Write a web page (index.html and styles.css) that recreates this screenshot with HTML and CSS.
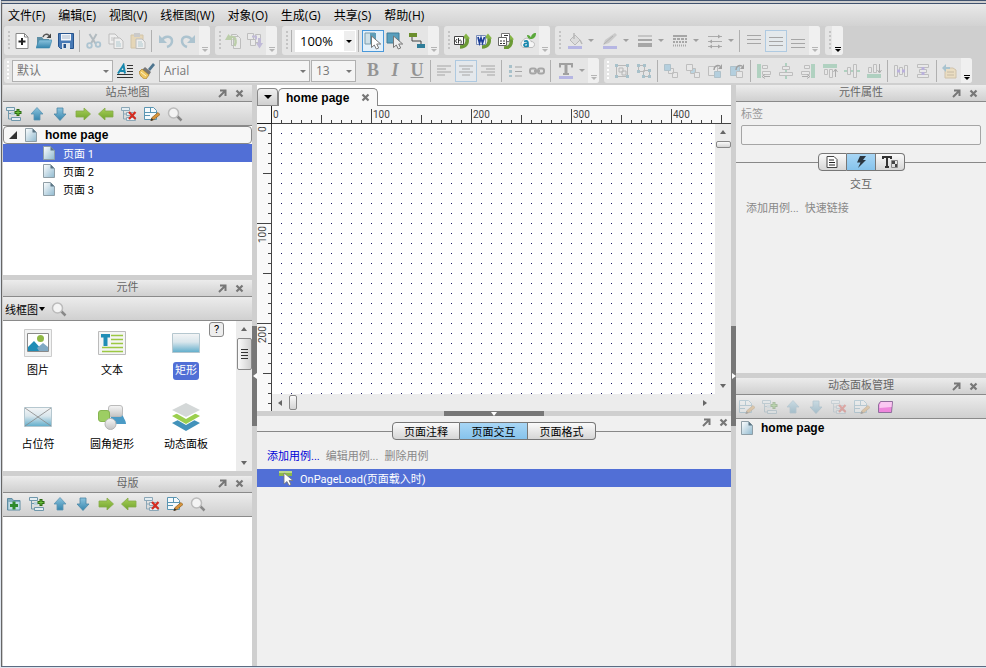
FILE: index.html
```html
<!DOCTYPE html>
<html lang="zh-CN">
<head>
    <meta charset="UTF-8">
    <meta name="viewport" content="width=device-width, initial-scale=1.0">
    <title>home page</title>
    <link rel="stylesheet" href="styles.css">
</head>
<body>
    <!-- 图标 -->
    <svg class="sprite" aria-hidden="true">
        <defs>
            <linearGradient id="g-blue" x1="0" y1="0" x2="0" y2="1"><stop offset="0" stop-color="#8cc4de"/><stop offset="1" stop-color="#3585ad"/></linearGradient>
            <linearGradient id="g-green" x1="0" y1="0" x2="0" y2="1"><stop offset="0" stop-color="#a8cf58"/><stop offset="1" stop-color="#6fa32c"/></linearGradient>
            <linearGradient id="g-page" x1="0" y1="0" x2="1" y2="1"><stop offset="0" stop-color="#fff"/><stop offset="1" stop-color="#8fb9cf"/></linearGradient>
            <linearGradient id="g-rect" x1="0" y1="0" x2="0" y2="1"><stop offset="0" stop-color="#f4f5f6"/><stop offset=".45" stop-color="#d9e6ec"/><stop offset="1" stop-color="#5fadcb"/></linearGradient>
            <linearGradient id="g-grey" x1="0" y1="0" x2="0" y2="1"><stop offset="0" stop-color="#f6f6f6"/><stop offset="1" stop-color="#c4c4c4"/></linearGradient>
            <pattern id="dots" width="10" height="10" patternUnits="userSpaceOnUse"><rect x="9" y="9" width="1" height="1" fill="#1c1c66"/></pattern>
        </defs>
        <symbol id="i-new" viewBox="0 0 16 16"><path d="M2 .5h8.500l3.500 3.500v11.500H2z" fill="#fff" stroke="#888"/><path d="M10.500.5v3.500H14" fill="none" stroke="#888"/><path d="M8 5v7M4.500 8.500h7" stroke="#222" stroke-width="2"/></symbol>
        <symbol id="i-open" viewBox="0 0 16 16"><path d="M1 14V4h5l1.500 2H13v8z" fill="#5f8fa5"/><path d="M0 15l3-8h13l-2.500 8z" fill="url(#g-blue)" stroke="#3b87ac" stroke-width=".6"/><path d="M7 4c1-3 4-3.500 6-1.500" fill="none" stroke="#555" stroke-width="1.500"/><path d="M15 .5v4.500h-4.500z" fill="#444"/></symbol>
        <symbol id="i-save" viewBox="0 0 16 16"><path d="M.5.5h15v15h-13l-2-2z" fill="#4779b5" stroke="#26538c"/><path d="M3 1h10v6.500H3z" fill="#f4f7fb"/><path d="M4 3h8M4 5h8" stroke="#a9b9cc"/><path d="M4 10h8v6H4z" fill="#dfe5ec"/><path d="M5.500 11h2.500v4H5.500z" fill="#26538c"/></symbol>
        <symbol id="i-cut" viewBox="0 0 16 16"><path d="M3.500 1l6 9.500M10.500 1L5 10.500" stroke="#566f7d" stroke-width="2"/><circle cx="3.500" cy="12.500" r="2.300" fill="none" stroke="#4689ad" stroke-width="1.800"/><circle cx="12" cy="11.500" r="2.300" fill="none" stroke="#4689ad" stroke-width="1.800"/></symbol>
        <symbol id="i-copy" viewBox="0 0 16 16"><path d="M1 1h6l3 3v7H1z" fill="#fff" stroke="#777"/><path d="M3 5h4M3 7h5" stroke="#888"/><path d="M6 5h6l3 3v7.500H6z" fill="#fff" stroke="#777"/><path d="M8 9h4M8 11h5M8 13h5" stroke="#59a"/></symbol>
        <symbol id="i-paste" viewBox="0 0 16 16"><path d="M1 2h12v13H1z" fill="#e7bc64" stroke="#b08a3b"/><path d="M4 0h6v4H4z" fill="#999"/><path d="M6 6h6l3 3v6.500H6z" fill="#fff" stroke="#777"/><path d="M8 9h4M8 11h5M8 13h5" stroke="#59a"/></symbol>
        <symbol id="i-undo" viewBox="0 0 16 16"><path d="M4 7c3-5 10-4 10 1 0 3-2 5-5 6" fill="none" stroke="#4384a6" stroke-width="2.500"/><path d="M1 2v8h8z" fill="#4384a6"/></symbol>
        <symbol id="i-redo" viewBox="0 0 16 16"><path d="M12 7C9 2 2 3 2 8c0 3 2 5 5 6" fill="none" stroke="#4384a6" stroke-width="2.500"/><path d="M15 2v8H7z" fill="#4384a6"/></symbol>
        <symbol id="i-out" viewBox="0 0 16 16"><path d="M6.500 1.500h5l2 2v9h-7z" fill="#f5f5f5" stroke="#777"/><path d="M8.500 3.500h5l2 2v10h-7z" fill="#f5f5f5" stroke="#777"/><path d="M4 6c1-3 6-3 6.500 1 .5 2 0 4-1 6" fill="none" stroke="#6ea43b" stroke-width="2.500"/><path d="M0 7l3.500-6L8 7z" fill="#6ea43b"/></symbol>
        <symbol id="i-in" viewBox="0 0 16 16"><path d="M.5.5h6v6h-6zM8.500 1.500h5v8h-5zM3.500 6.500h5v6h-5z" fill="#f5f5f5" stroke="#777"/><path d="M11 5h3v5h2l-3.500 5.500L9 10h2z" fill="#7c6cc0"/><path d="M5 3.500h4v3" fill="none" stroke="#7c6cc0" stroke-width="2"/></symbol>
        <symbol id="i-sel" viewBox="0 0 18 18"><path d="M1 1h10v11H1z" fill="#cfe0e8" stroke="#7d9dac"/><path d="M6 1h6v11H6z" fill="#5e9db8"/><path d="M7.500 4v11.500l2.800-2.500 2 4 2.400-1-2-4h4z" fill="#fff" stroke="#777"/></symbol>
        <symbol id="i-sel2" viewBox="0 0 18 18"><path d="M1 1h12v10H1z" fill="#5a9fbd" stroke="#3f7d99"/><path d="M7.500 4v11.500l2.800-2.500 2 4 2.400-1-2-4h4z" fill="#eee" stroke="#777"/></symbol>
        <symbol id="i-conn" viewBox="0 0 18 18"><path d="M4 4v5h9v4" fill="none" stroke="#444"/><path d="M1 1h8v4H1z" fill="#6b8e2d"/><path d="M9 12h8v4H9z" fill="#2f7d99"/></symbol>
        <symbol id="i-html" viewBox="0 0 16 16"><path d="M6 14c6 0 8-4 7-9" fill="none" stroke="#6b9a35" stroke-width="3.500"/><path d="M8 5.500L12 .5l4 5z" fill="#86b545"/><path d="M.5 3.500h9v8h-9z" fill="#fff" stroke="#444"/><path d="M3 6L1.500 8 3 10M4.500 5v5.500M4.500 8c3-2 3 0 2.500 2.500" fill="none" stroke="#333"/></symbol>
        <symbol id="i-word" viewBox="0 0 16 16"><path d="M6 14c6 0 8-4 7-9" fill="none" stroke="#6b9a35" stroke-width="3.500"/><path d="M8 5.500L12 .5l4 5z" fill="#86b545"/><path d="M.5 2.500h9v9h-9z" fill="#eef2fb" stroke="#7d8fb8"/><path d="M2 4l1.500 6L5 5l1.500 5L8.500 4" fill="none" stroke="#1c3e96" stroke-width="1.700"/></symbol>
        <symbol id="i-spec" viewBox="0 0 16 16"><path d="M6 15c6 0 8-4 7-9" fill="none" stroke="#6b9a35" stroke-width="3.500"/><path d="M9 6.500L12.500 2l3.500 4.500z" fill="#86b545"/><path d="M3.500.5h8v8h-8z" fill="#fff" stroke="#777"/><path d="M.5 4.500h8v8h-8z" fill="#fff" stroke="#666"/><path d="M2 8h2M5 8h2M2 10.500h2M5 10.500h2M6 2.500h4" stroke="#333"/></symbol>
        <symbol id="i-share" viewBox="0 0 16 16"><path d="M3 14.500a4 4 0 0 1 0-7c2-4 8-2 8 1 5 0 4 6 1 6z" fill="#f5f5f5" stroke="#bbb"/><path d="M4 8.500c5-2 4 2 4 5.500M8 10.500c-5-1-5 3-2 3 1 0 2-1 2-2" fill="none" stroke="#1787ad" stroke-width="1.700"/><path d="M10 6C7 5 7 2 7 2c3 0 4 2 4 3 0-3 2-5 5-5 0 4-2 6-6 6z" fill="#5aa83a"/></symbol>
        <symbol id="i-bucket" viewBox="0 0 16 16"><path d="M3 7l5-5 5 5-5 5z" fill="#ccc" stroke="#666"/><path d="M7 0v6M13 7l2 4" stroke="#666" stroke-width="1.500"/><path d="M1 13h14v3H1z" fill="#6060e0"/></symbol>
        <symbol id="i-pen" viewBox="0 0 16 16"><path d="M1 12l2-5L13 0l2 2-8 8z" fill="#999"/><path d="M2 11l9-8" stroke="#555"/><path d="M1 13h14v3H1z" fill="#6060e0"/></symbol>
        <symbol id="i-weight" viewBox="0 0 16 16"><path d="M1 3h14" stroke="#333"/><path d="M1 7h14" stroke="#333" stroke-width="2"/><path d="M1 12h14" stroke="#333" stroke-width="4"/></symbol>
        <symbol id="i-dash" viewBox="0 0 16 16"><g stroke="#333" stroke-width="2"><path d="M1 3h14"/><path d="M1 6h14" stroke-dasharray="3 1"/><path d="M1 9h14" stroke-dasharray="2 1"/><path d="M1 12.500h14" stroke-dasharray="1 1"/></g></symbol>
        <symbol id="i-ends" viewBox="0 0 16 16"><path d="M1 3.500h14M1 8.500h14M1 13.500h14" stroke="#444"/><path d="M11 1.500l3 2-3 2zM5 6.500l-3 2 3 2zM5 11.500l-3 2 3 2zM11 11.500l3 2-3 2z" fill="#333"/></symbol>
        <symbol id="i-vtop" viewBox="0 0 16 16"><path d="M1 2.500h14M1 6.500h14M1 10.500h14" stroke="#333"/></symbol>
        <symbol id="i-vmid" viewBox="0 0 16 16"><path d="M1 4.500h14M1 8.500h14M1 12.500h14" stroke="#333"/></symbol>
        <symbol id="i-vbot" viewBox="0 0 16 16"><path d="M1 6.500h14M1 10.500h14M1 14.500h14" stroke="#333"/></symbol>
        <symbol id="i-style" viewBox="0 0 16 16"><path d="M1 10.500L6.500 2 8 10.500M3 8h5" fill="none" stroke="#1787ad" stroke-width="2"/><path d="M10 2.500h6M10 5.500h6M10 8.500h6M0 11.500h16M0 14.500h16" stroke="#333"/></symbol>
        <symbol id="i-brush" viewBox="0 0 16 16"><path d="M9 6l5-6 2 2-5 6z" fill="#4e758f"/><path d="M6 4l6 5-2 3-7-5z" fill="#777"/><path d="M3 6l7 6-3 4c-3 0-6-3-7-7z" fill="#eec662" stroke="#a47a25" stroke-width=".7"/><path d="M2 9l5 4" stroke="#fff4c5"/></symbol>
        <symbol id="i-left" viewBox="0 0 16 16"><path d="M1 3h14M1 6h9M1 9h14M1 12h8" stroke="#333"/></symbol>
        <symbol id="i-center" viewBox="0 0 16 16"><path d="M1 3h14M4 6h8M1 9h14M4 12h8" stroke="#333"/></symbol>
        <symbol id="i-right" viewBox="0 0 16 16"><path d="M1 3h14M6 6h9M1 9h14M7 12h8" stroke="#333"/></symbol>
        <symbol id="i-list" viewBox="0 0 16 16"><path d="M2 2h3v3H2zM2 7h3v3H2zM2 12h3v2H2z" fill="#388099"/><path d="M8 4h7M8 8.500h7M8 13h7" stroke="#333"/></symbol>
        <symbol id="i-link" viewBox="0 0 16 16"><rect x="1" y="5.500" width="6" height="5" rx="2" fill="none" stroke="#333" stroke-width="2"/><rect x="9" y="5.500" width="6" height="5" rx="2" fill="none" stroke="#333" stroke-width="2"/><path d="M5 8h6" stroke="#333" stroke-width="2"/></symbol>
        <symbol id="i-textcolor" viewBox="0 0 16 16"><path d="M2 4.500V1h12v3.500M5 11h6" fill="none" stroke="#222" stroke-width="2"/><path d="M8 1v10" stroke="#222" stroke-width="3"/><path d="M1 13h14v3H1z" fill="#6060e0"/></symbol>
        <symbol id="i-group" viewBox="0 0 16 16"><path d="M2.500 2.500h11v11h-11z" fill="none" stroke="#666"/><path d="M5 5h4v4H5zM8 8h4v4H8z" fill="none" stroke="#666"/><path d="M1 1h3v3H1zM12 1h3v3h-3zM1 12h3v3H1zM12 12h3v3h-3z" fill="#388099"/></symbol>
        <symbol id="i-ungroup" viewBox="0 0 16 16"><path d="M2.500 2.500h6v6h-6zM7.500 7.500h6v6h-6z" fill="none" stroke="#666"/><path d="M1 1h3v3H1zM7 1h3v3H7zM1 7h3v3H1zM12 6h3v3h-3zM6 12h3v3H6zM12 12h3v3h-3z" fill="#388099"/></symbol>
        <symbol id="i-front" viewBox="0 0 16 16"><path d="M9.500 9.500h5v5h-5zM5.500 5.500h5v5h-5z" fill="#eee" stroke="#777"/><path d="M1.500 1.500h6v6h-6z" fill="#5aa6d0" stroke="#4a7f99"/></symbol>
        <symbol id="i-back" viewBox="0 0 16 16"><path d="M5.500 5.500h5v5h-5z" fill="#6eb4d8" stroke="#777"/><path d="M1.500 1.500h6v6h-6zM9.500 9.500h5v5h-5z" fill="#eee" stroke="#777"/></symbol>
        <symbol id="i-fwd" viewBox="0 0 16 16"><path d="M1.500 3.500h9v9h-9z" fill="#eee" stroke="#777"/><path d="M7.500 8.500h6v6h-6z" fill="#5aa6d0" stroke="#4a7f99"/><path d="M7 7c0-4 3-5 6-4" fill="none" stroke="#222" stroke-width="1.500"/><path d="M15 1v5h-4z" fill="#222"/></symbol>
        <symbol id="i-bwd" viewBox="0 0 16 16"><path d="M1.500 3.500h9v9h-9z" fill="#5aa6d0" stroke="#4a7f99"/><path d="M7.500 8.500h6v6h-6z" fill="#eee" stroke="#777"/><path d="M7 7c0-4 3-5 6-4" fill="none" stroke="#222" stroke-width="1.500"/><path d="M15 1v5h-4z" fill="#222"/></symbol>
        <symbol id="i-al" viewBox="0 0 16 16"><path d="M1 1h4v14H1z" fill="#4dab7c"/><path d="M6.500 2.500h5v3h-5zM6.500 8.500h8v3h-8z" fill="#eee" stroke="#777"/><path d="M14 13.500H8M9 11.500l-3 2 3 2" fill="none" stroke="#444"/></symbol>
        <symbol id="i-ac" viewBox="0 0 16 16"><path d="M7 0h2v16H7z" fill="#4dab7c"/><path d="M4.500 3.500h7v3h-7zM1.500 9.500h13v3h-13z" fill="#eee" stroke="#777"/></symbol>
        <symbol id="i-ar" viewBox="0 0 16 16"><path d="M11 1h4v14h-4z" fill="#4dab7c"/><path d="M4.500 2.500h5v3h-5zM1.500 8.500h8v3h-8z" fill="#eee" stroke="#777"/><path d="M2 13.500h6M7 11.500l3 2-3 2" fill="none" stroke="#444"/></symbol>
        <symbol id="i-at" viewBox="0 0 16 16"><path d="M1 1h14v4H1z" fill="#4dab7c"/><path d="M2.500 6.500h3v5h-3zM7.500 6.500h3v8h-3z" fill="#eee" stroke="#777"/><path d="M13.500 14V7M11.500 9l2-3 2 3" fill="none" stroke="#444"/></symbol>
        <symbol id="i-am" viewBox="0 0 16 16"><path d="M0 7h16v2H0z" fill="#4dab7c"/><path d="M3.500 4.500h3v7h-3zM9.500 1.500h3v13h-3z" fill="#eee" stroke="#777"/></symbol>
        <symbol id="i-ab" viewBox="0 0 16 16"><path d="M1 11h14v4H1z" fill="#4dab7c"/><path d="M2.500 4.500h3v5h-3zM7.500 1.500h3v8h-3z" fill="#eee" stroke="#777"/><path d="M13.500 1v8M11.500 7l2 3 2-3" fill="none" stroke="#444"/></symbol>
        <symbol id="i-dh" viewBox="0 0 16 16"><path d="M1.500 2.500h3v11h-3zM6.500 4.500h3v7h-3zM11.500 2.500h3v11h-3z" fill="#eee" stroke="#777"/><path d="M4 6.500h3v3H4zM9 6.500h3v3H9z" fill="#6b51ca"/></symbol>
        <symbol id="i-dv" viewBox="0 0 16 16"><path d="M2.500 1.500h11v3h-11zM4.500 6.500h7v3h-7zM2.500 11.500h11v3h-11z" fill="#eee" stroke="#777"/><path d="M6.500 4h3v3h-3zM6.500 9h3v3h-3z" fill="#6b51ca"/></symbol>
        <symbol id="i-note" viewBox="0 0 16 16"><path d="M3 5h8l3 2v8H3z" fill="#f3cf82" stroke="#a58142"/><path d="M5 9h7M5 12h7" stroke="#8c6a2c"/><path d="M8 4H4V1L0 5l4 4V6h4z" fill="#3785a5"/></symbol>

        <symbol id="i-addpage" viewBox="0 0 16 16"><path d="M.5 1.500h8v3h-8zM5.500 11.500h9v3h-9z" fill="#e3edf2" stroke="#6f97ab"/><path d="M2.500 5v8h3M2.500 7.500h4" fill="none" stroke="#6f97ab"/><path d="M5 6h4v3H5z" fill="#b8d0dc"/><path d="M12 3v7M8.500 6.500h7" stroke="#2c6b12" stroke-width="3"/><path d="M12 4v5M9.500 6.500h5" stroke="#6cc23e"/></symbol>
        <symbol id="i-up" viewBox="0 0 16 16"><path d="M8 1.500l6 6.500h-3v6H5V8H2z" fill="url(#g-blue)" stroke="#5e96b2" stroke-width=".8"/></symbol>
        <symbol id="i-down" viewBox="0 0 16 16"><path d="M8 14.500L2 8h3V2h6v6h3z" fill="url(#g-blue)" stroke="#4b86a5" stroke-width=".8"/></symbol>
        <symbol id="i-indent" viewBox="0 0 16 16"><path d="M15.500 8L9 2v3H1v6h8v3z" fill="url(#g-green)" stroke="#85ab49" stroke-width=".8"/></symbol>
        <symbol id="i-outdent" viewBox="0 0 16 16"><path d="M.5 8L7 2v3h8v6H7v3z" fill="url(#g-green)" stroke="#85ab49" stroke-width=".8"/></symbol>
        <symbol id="i-del" viewBox="0 0 16 16"><path d="M.5 1.500h8v3h-8zM5.500 11.500h9v3h-9zM5.500 6.500h7v3h-7z" fill="#e3edf2" stroke="#8ba7b7"/><path d="M2.500 5v8h3M2.500 8h3" fill="none" stroke="#8ba7b7"/><path d="M8 6l6.500 7M14.500 6L8 13" stroke="#d42c20" stroke-width="2.200"/></symbol>
        <symbol id="i-edit" viewBox="0 0 16 16"><path d="M.5 1.500h9l3 3v9H.5z" fill="#f5fafc" stroke="#5a95b2"/><path d="M1 6.500h11M6.500 2v5M1 9.500h5" fill="none" stroke="#5a95b2"/><path d="M7 14.500l1-3 6-5 2 2-6 5z" fill="#d9953b" stroke="#8b5d20" stroke-width=".7"/><path d="M6.500 15l1-3 2 2z" fill="#333"/></symbol>
        <symbol id="i-search" viewBox="0 0 16 16"><path d="M10 10l4.500 4.500" stroke="#888" stroke-width="2.500"/><circle cx="6.500" cy="7" r="5" fill="#f4f4f4" stroke="#bbb" stroke-width="1.500"/></symbol>
        <symbol id="i-folder" viewBox="0 0 16 16"><path d="M1.500 14V2.500H6l1.500 2H14V14z" fill="#83adc0" stroke="#5e8ca2"/><path d="M2.500 6h11v7.500h-11z" fill="#c1dce7"/><path d="M8 5.500v8M4 9.500h8" stroke="#2f8a2d" stroke-width="3"/></symbol>
        <symbol id="i-panel" viewBox="0 0 16 16"><path d="M3.500 2.500h12l-1 11h-13v-8z" fill="#ee86dc" stroke="#8f6f9c"/><path d="M4 3h11l-.5 5-12 1v-3z" fill="#fac8f2"/></symbol>
        <symbol id="i-page" viewBox="0 0 12 14"><path d="M.5.5h7l4 4v9H.5z" fill="url(#g-page)" stroke="#8f9ea6"/><path d="M7.500.5v4h4z" fill="#5b7584"/></symbol>
        <symbol id="i-pop" viewBox="0 0 9 9"><path d="M2 1.500h5.500V7M7 2L1 8" fill="none" stroke="#777" stroke-width="2"/></symbol>
        <symbol id="i-close" viewBox="0 0 9 9"><path d="M1.500 1.500l6 6M7.500 1.500l-6 6" fill="none" stroke="#777" stroke-width="2.200"/></symbol>
        <symbol id="i-event" viewBox="0 0 16 16"><path d="M1 1h13v5H1z" fill="#8cb84c"/><path d="M1 1h13v2H1z" fill="#bcd98c"/><path d="M6 3v11l3-2.500 2 4 2-1-2-4h4z" fill="#fff" stroke="#777" stroke-width=".8"/></symbol>

        <symbol id="w-image" viewBox="0 0 28 28"><path d="M.5.5h27v27H.5z" fill="#f2f3f3" stroke="#ccc"/><path d="M3.500 4.500h21v18h-21z" fill="#fff" stroke="#8a8a8a"/><circle cx="16.500" cy="9.500" r="3.500" fill="#8fb845"/><path d="M4 18l6-6 9 10H4z" fill="#1f8db6"/><path d="M13 19l6-5 5 4v4h-9z" fill="#7fa9c4"/></symbol>
        <symbol id="w-text" viewBox="0 0 28 28"><path d="M.5 2.500h27v23H.5z" fill="#f4f5f5" stroke="#bbb"/><path d="M3 5h9v3.500H9.500V17h-4V8.500H3z" fill="#1f8db6"/><path d="M13 6.500h12M13 10.500h12M13 14.500h12M4 18.500h21M4 22.500h21" stroke="#9cc842" stroke-width="1.500"/></symbol>
        <symbol id="w-rect" viewBox="0 0 28 28"><path d="M.5 4.500h27v19H.5z" fill="url(#g-rect)" stroke="#b5c7cf"/></symbol>
        <symbol id="w-holder" viewBox="0 0 28 28"><path d="M.5 4.500h27v19H.5z" fill="url(#g-rect)" stroke="#b5c7cf"/><path d="M1 5l26 18M27 5L1 23" stroke="#888" stroke-width=".8"/></symbol>
        <symbol id="w-round" viewBox="0 0 28 28"><path d="M15 10h9c1 5 4 7 4 11H16c-3 0-4-2-4-5z" fill="#4b9bc6"/><rect x="10.500" y="2.500" width="14" height="11" rx="2.500" fill="url(#g-grey)" stroke="#bbb"/><rect x=".5" y="7.500" width="11" height="11" rx="2.500" fill="#9dce63" stroke="#86b551"/><circle cx="12.500" cy="21" r="5.500" fill="url(#g-grey)" stroke="#b5b5b5"/></symbol>
        <symbol id="w-dyn" viewBox="0 0 28 28"><path d="M0 20l14-7 14 7-14 8z" fill="#4292ba"/><path d="M0 14l14-7 14 7-14 8z" fill="#fff"/><path d="M0 13l14-7 14 7-14 8z" fill="#9bcf4e"/><path d="M0 8l14-7 14 7-14 8z" fill="#fff"/><path d="M0 7l14-7 14 7-14 7z" fill="#d4d8d8"/></symbol>

        <symbol id="s-doc" viewBox="0 0 14 14"><path d="M2 1.500h7l3 3v8H2z" fill="#fff" stroke="#444"/><path d="M4 5h5M4 7.500h6M4 10h6" stroke="#222"/></symbol>
        <symbol id="s-bolt" viewBox="0 0 14 14"><path d="M6 1h6L9 5h3L4 13l2.500-5.500H3z" fill="#2b3640"/></symbol>
        <symbol id="s-type" viewBox="0 0 16 14"><path d="M1 4V2h8v2M5 2v10M3 12h4" fill="none" stroke="#333" stroke-width="2"/><path d="M10 6h3v3h-3zM13 9h3v3h-3z" fill="#444"/><path d="M9.500 5.500h6v7h-6z" fill="none" stroke="#888"/></symbol>
    </svg>

    <div class="app">
        <nav class="menubar">
            <button>文件(F)</button>
            <button>编辑(E)</button>
            <button>视图(V)</button>
            <button>线框图(W)</button>
            <button>对象(O)</button>
            <button>生成(G)</button>
            <button>共享(S)</button>
            <button>帮助(H)</button>
        </nav>

        <div class="toolbars">
            <div class="toolbar-row">
                <div class="group">
                    <span class="grip"></span>
                    <button class="tool" aria-label="新建"><svg><use href="#i-new"/></svg></button>
                    <button class="tool" aria-label="打开"><svg><use href="#i-open"/></svg></button>
                    <button class="tool" aria-label="保存"><svg><use href="#i-save"/></svg></button>
                    <span class="sep"></span>
                    <button class="tool" disabled aria-label="剪切"><svg><use href="#i-cut"/></svg></button>
                    <button class="tool" disabled aria-label="复制"><svg><use href="#i-copy"/></svg></button>
                    <button class="tool" disabled aria-label="粘贴"><svg><use href="#i-paste"/></svg></button>
                    <span class="sep"></span>
                    <button class="tool" disabled aria-label="撤销"><svg><use href="#i-undo"/></svg></button>
                    <button class="tool" disabled aria-label="重做"><svg><use href="#i-redo"/></svg></button>
                    <span class="overflow"></span>
                </div>
                <div class="group">
                    <span class="grip"></span>
                    <button class="tool" disabled aria-label="签出"><svg><use href="#i-out"/></svg></button>
                    <button class="tool" disabled aria-label="签入"><svg><use href="#i-in"/></svg></button>
                    <span class="overflow"></span>
                </div>
                <div class="group">
                    <span class="grip"></span>
                    <span class="sep"></span>
                    <span class="combo zoom"><select aria-label="缩放"><option>100%</option></select></span>
                    <span class="sep"></span>
                    <button class="tool big active" aria-label="相交选择"><svg><use href="#i-sel"/></svg></button>
                    <button class="tool big" aria-label="包含选择"><svg><use href="#i-sel2"/></svg></button>
                    <button class="tool big" aria-label="连接线"><svg><use href="#i-conn"/></svg></button>
                    <span class="overflow"></span>
                </div>
                <div class="group">
                    <span class="grip"></span>
                    <button class="tool" aria-label="生成原型"><svg><use href="#i-html"/></svg></button>
                    <button class="tool" aria-label="生成 Word"><svg><use href="#i-word"/></svg></button>
                    <button class="tool" aria-label="更多生成器"><svg><use href="#i-spec"/></svg></button>
                    <button class="tool" aria-label="分享"><svg><use href="#i-share"/></svg></button>
                    <span class="overflow"></span>
                </div>
                <div class="group">
                    <span class="grip"></span>
                    <button class="tool drop" disabled aria-label="填充"><svg><use href="#i-bucket"/></svg></button>
                    <button class="tool drop" disabled aria-label="线条颜色"><svg><use href="#i-pen"/></svg></button>
                    <button class="tool drop" disabled aria-label="线宽"><svg><use href="#i-weight"/></svg></button>
                    <button class="tool drop" disabled aria-label="线型"><svg><use href="#i-dash"/></svg></button>
                    <button class="tool drop" disabled aria-label="箭头"><svg><use href="#i-ends"/></svg></button>
                    <span class="sep"></span>
                    <button class="tool" disabled aria-label="顶部对齐"><svg><use href="#i-vtop"/></svg></button>
                    <button class="tool active" disabled aria-label="中部对齐"><svg><use href="#i-vmid"/></svg></button>
                    <button class="tool" disabled aria-label="底部对齐"><svg><use href="#i-vbot"/></svg></button>
                    <span class="overflow"></span>
                </div>
                <div class="group">
                    <span class="grip"></span>
                    <span class="overflow dark"></span>
                </div>
            </div>

            <div class="toolbar-row second">
                <div class="group">
                    <span class="grip"></span>
                    <span class="combo style"><select disabled aria-label="样式"><option>默认</option></select></span>
                    <button class="tool" aria-label="样式编辑器"><svg><use href="#i-style"/></svg></button>
                    <button class="tool" aria-label="格式刷"><svg><use href="#i-brush"/></svg></button>
                    <span class="combo font"><select disabled aria-label="字体"><option>Arial</option></select></span>
                    <span class="combo size"><select disabled aria-label="字号"><option>13</option></select></span>
                    <button class="tool letter bold" disabled>B</button>
                    <button class="tool letter italic" disabled>I</button>
                    <button class="tool letter underline" disabled>U</button>
                    <span class="sep"></span>
                    <button class="tool" disabled aria-label="左对齐"><svg><use href="#i-left"/></svg></button>
                    <button class="tool active" disabled aria-label="居中"><svg><use href="#i-center"/></svg></button>
                    <button class="tool" disabled aria-label="右对齐"><svg><use href="#i-right"/></svg></button>
                    <span class="sep"></span>
                    <button class="tool" disabled aria-label="项目符号"><svg><use href="#i-list"/></svg></button>
                    <button class="tool" disabled aria-label="链接"><svg><use href="#i-link"/></svg></button>
                    <span class="sep"></span>
                    <button class="tool drop" disabled aria-label="文字颜色"><svg><use href="#i-textcolor"/></svg></button>
                    <span class="overflow"></span>
                </div>
                <div class="group">
                    <span class="grip"></span>
                    <button class="tool" disabled aria-label="组合"><svg><use href="#i-group"/></svg></button>
                    <button class="tool" disabled aria-label="取消组合"><svg><use href="#i-ungroup"/></svg></button>
                    <span class="sep"></span>
                    <button class="tool" disabled aria-label="置于顶层"><svg><use href="#i-front"/></svg></button>
                    <button class="tool" disabled aria-label="置于底层"><svg><use href="#i-back"/></svg></button>
                    <button class="tool" disabled aria-label="上移一层"><svg><use href="#i-fwd"/></svg></button>
                    <button class="tool" disabled aria-label="下移一层"><svg><use href="#i-bwd"/></svg></button>
                    <span class="sep"></span>
                    <button class="tool" disabled aria-label="左侧对齐"><svg><use href="#i-al"/></svg></button>
                    <button class="tool" disabled aria-label="水平居中"><svg><use href="#i-ac"/></svg></button>
                    <button class="tool" disabled aria-label="右侧对齐"><svg><use href="#i-ar"/></svg></button>
                    <button class="tool" disabled aria-label="上对齐"><svg><use href="#i-at"/></svg></button>
                    <button class="tool" disabled aria-label="垂直居中"><svg><use href="#i-am"/></svg></button>
                    <button class="tool" disabled aria-label="下对齐"><svg><use href="#i-ab"/></svg></button>
                    <span class="sep"></span>
                    <button class="tool" disabled aria-label="横向分布"><svg><use href="#i-dh"/></svg></button>
                    <button class="tool" disabled aria-label="纵向分布"><svg><use href="#i-dv"/></svg></button>
                    <span class="sep"></span>
                    <button class="tool" disabled aria-label="脚注"><svg><use href="#i-note"/></svg></button>
                    <span class="overflow dark"></span>
                </div>
            </div>
        </div>

        <div class="workspace">
            <!-- 左侧 -->
            <aside class="side left">
                <section class="panel">
                    <header class="panel-title">
                        <h2>站点地图</h2>
                        <div class="panel-btns">
                            <button aria-label="弹出"><svg><use href="#i-pop"/></svg></button>
                            <button aria-label="关闭"><svg><use href="#i-close"/></svg></button>
                        </div>
                    </header>
                    <div class="panel-tools">
                        <button aria-label="新增页面"><svg><use href="#i-addpage"/></svg></button>
                        <button aria-label="上移"><svg><use href="#i-up"/></svg></button>
                        <button aria-label="下移"><svg><use href="#i-down"/></svg></button>
                        <button aria-label="降级"><svg><use href="#i-indent"/></svg></button>
                        <button aria-label="升级"><svg><use href="#i-outdent"/></svg></button>
                        <button aria-label="删除"><svg><use href="#i-del"/></svg></button>
                        <button aria-label="编辑"><svg><use href="#i-edit"/></svg></button>
                        <button aria-label="搜索"><svg><use href="#i-search"/></svg></button>
                    </div>
                    <ul class="tree">
                        <li class="root"><span class="twisty"></span><svg><use href="#i-page"/></svg>home page</li>
                        <li class="selected"><svg><use href="#i-page"/></svg>页面 1</li>
                        <li><svg><use href="#i-page"/></svg>页面 2</li>
                        <li><svg><use href="#i-page"/></svg>页面 3</li>
                    </ul>
                </section>

                <section class="panel">
                    <header class="panel-title">
                        <h2>元件</h2>
                        <div class="panel-btns">
                            <button aria-label="弹出"><svg><use href="#i-pop"/></svg></button>
                            <button aria-label="关闭"><svg><use href="#i-close"/></svg></button>
                        </div>
                    </header>
                    <div class="panel-tools">
                        <button class="library">线框图</button>
                        <button aria-label="搜索"><svg><use href="#i-search"/></svg></button>
                    </div>
                    <div class="widgets">
                        <ul class="widget-grid">
                            <li><svg><use href="#w-image"/></svg><span>图片</span></li>
                            <li><svg><use href="#w-text"/></svg><span>文本</span></li>
                            <li class="selected"><svg><use href="#w-rect"/></svg><span>矩形</span></li>
                            <li><svg><use href="#w-holder"/></svg><span>占位符</span></li>
                            <li><svg><use href="#w-round"/></svg><span>圆角矩形</span></li>
                            <li><svg><use href="#w-dyn"/></svg><span>动态面板</span></li>
                        </ul>
                        <button class="help">?</button>
                        <div class="scroll vertical lines">
                            <i class="arrow up"></i>
                            <span class="thumb"></span>
                            <i class="arrow down"></i>
                        </div>
                    </div>
                </section>

                <section class="panel">
                    <header class="panel-title">
                        <h2>母版</h2>
                        <div class="panel-btns">
                            <button aria-label="弹出"><svg><use href="#i-pop"/></svg></button>
                            <button aria-label="关闭"><svg><use href="#i-close"/></svg></button>
                        </div>
                    </header>
                    <div class="panel-tools">
                        <button aria-label="新增文件夹"><svg><use href="#i-folder"/></svg></button>
                        <button aria-label="新增母版"><svg><use href="#i-addpage"/></svg></button>
                        <button aria-label="上移"><svg><use href="#i-up"/></svg></button>
                        <button aria-label="下移"><svg><use href="#i-down"/></svg></button>
                        <button aria-label="降级"><svg><use href="#i-indent"/></svg></button>
                        <button aria-label="升级"><svg><use href="#i-outdent"/></svg></button>
                        <button aria-label="删除"><svg><use href="#i-del"/></svg></button>
                        <button aria-label="编辑"><svg><use href="#i-edit"/></svg></button>
                        <button aria-label="搜索"><svg><use href="#i-search"/></svg></button>
                    </div>
                </section>
            </aside>

            <div class="splitter"><span class="handle"><i class="arrow left"></i></span></div>

            <!-- 中间 -->
            <main class="center">
                <div class="tabs">
                    <button class="tab-menu" aria-label="页面列表"><i class="arrow down"></i></button>
                    <div class="tab">home page<button aria-label="关闭"><svg><use href="#i-close"/></svg></button></div>
                </div>
                <div class="editor">
                    <div class="corner"></div>
                    <div class="ruler-h"><span>0</span><span>100</span><span>200</span><span>300</span><span>400</span></div>
                    <div class="ruler-v"><span>0</span><span>100</span><span>200</span></div>
                    <svg class="canvas"><rect width="100%" height="100%" fill="url(#dots)"/></svg>
                    <div class="scroll vertical">
                        <i class="arrow up"></i>
                        <span class="thumb"></span>
                        <i class="arrow down"></i>
                    </div>
                    <div class="scroll horizontal">
                        <i class="arrow left"></i>
                        <span class="thumb"></span>
                        <i class="arrow right"></i>
                    </div>
                </div>
                <div class="splitter flat"><span class="handle"><i class="arrow down"></i></span></div>
                <section class="page-panel">
                    <div class="segments">
                        <button>页面注释</button>
                        <button class="on">页面交互</button>
                        <button>页面格式</button>
                    </div>
                    <div class="panel-btns">
                        <button aria-label="弹出"><svg><use href="#i-pop"/></svg></button>
                        <button aria-label="关闭"><svg><use href="#i-close"/></svg></button>
                    </div>
                    <div class="links">
                        <a class="enabled" href="#">添加用例...</a>
                        <a href="#">编辑用例...</a>
                        <a href="#">删除用例</a>
                    </div>
                    <div class="event"><svg><use href="#i-event"/></svg>OnPageLoad(页面载入时)</div>
                </section>
            </main>

            <div class="splitter"><span class="handle"><i class="arrow right"></i></span></div>

            <!-- 右侧 -->
            <aside class="side right">
                <section class="panel">
                    <header class="panel-title">
                        <h2>元件属性</h2>
                        <div class="panel-btns">
                            <button aria-label="弹出"><svg><use href="#i-pop"/></svg></button>
                            <button aria-label="关闭"><svg><use href="#i-close"/></svg></button>
                        </div>
                    </header>
                    <div class="field">
                        <label for="widget-label">标签</label>
                        <input type="text" id="widget-label" disabled>
                    </div>
                    <div class="segments icons">
                        <button aria-label="注释"><svg><use href="#s-doc"/></svg></button>
                        <button class="on" aria-label="交互"><svg><use href="#s-bolt"/></svg></button>
                        <button aria-label="格式"><svg><use href="#s-type"/></svg></button>
                    </div>
                    <p class="caption">交互</p>
                    <div class="links">
                        <a href="#">添加用例...</a>
                        <a href="#">快速链接</a>
                    </div>
                </section>

                <section class="panel">
                    <header class="panel-title">
                        <h2>动态面板管理</h2>
                        <div class="panel-btns">
                            <button aria-label="弹出"><svg><use href="#i-pop"/></svg></button>
                            <button aria-label="关闭"><svg><use href="#i-close"/></svg></button>
                        </div>
                    </header>
                    <div class="panel-tools">
                        <button disabled aria-label="编辑"><svg><use href="#i-edit"/></svg></button>
                        <button disabled aria-label="新增状态"><svg><use href="#i-addpage"/></svg></button>
                        <button disabled aria-label="上移"><svg><use href="#i-up"/></svg></button>
                        <button disabled aria-label="下移"><svg><use href="#i-down"/></svg></button>
                        <button disabled aria-label="删除"><svg><use href="#i-del"/></svg></button>
                        <button disabled aria-label="编辑全部"><svg><use href="#i-edit"/></svg></button>
                        <button aria-label="显示面板"><svg><use href="#i-panel"/></svg></button>
                    </div>
                    <ul class="page-list">
                        <li><svg><use href="#i-page"/></svg>home page</li>
                    </ul>
                </section>
            </aside>
        </div>
    </div>
</body>
</html>
```
FILE: styles.css
```css
* {
    box-sizing: border-box;
}
body {
    margin: 0;
    font-family: Roboto, "Noto Sans CJK SC", sans-serif;
    font-size: 11px;
    color: #000;
    background: #dfe6ef;
}
button, select, input {
    font: inherit;
    color: inherit;
    margin: 0;
    padding: 0;
    border: none;
    background: none;
}
h2, p, ul {
    margin: 0;
    padding: 0;
    font-weight: normal;
    font-size: 11px;
    list-style: none;
}
.sprite {
    position: absolute;
    width: 0;
    height: 0;
}
.app {
    display: flex;
    flex-direction: column;
    height: calc(100vh - 1px);
    margin-left: 1px;
    border-top: 4px double #40536f;
    border-left: 1px solid #666;
    border-bottom: 1px solid #5b6b82;
    padding-left: 1px;
    background: #cfcfcf;
}

/* 菜单 */
.menubar {
    display: flex;
    gap: 13px;
    height: 22px;
    padding: 0 5px;
    font-family: "Open Sans", "Noto Sans CJK SC", sans-serif;
    font-size: 12px;
    background: linear-gradient(#e9e9e9, #d2d2d2);
}

/* 工具栏 */
.toolbars {
    height: 59px;
    font-family: "Open Sans", "Noto Sans CJK SC", sans-serif;
    font-size: 12px;
}
.toolbar-row {
    display: flex;
    gap: 5px;
    height: 29px;
    margin-bottom: 3px;
    padding-left: 1px;
}
.toolbar-row.second {
    height: 25px;
}
.group {
    display: flex;
    align-items: center;
    border-radius: 3px;
    background: #e5e5e5;
    overflow: hidden;
}
.grip {
    width: 7px;
    height: 20px;
    background: linear-gradient(#fff 2px, transparent 2px) 3px 0 / 2px 4px repeat-y;
}
.toolbar-row:first-child .grip {
    background: linear-gradient(#c4c4c4 2px, transparent 2px) 4px 0 / 2px 4px repeat-y;
}
.sep {
    width: 6px;
    height: 22px;
    background: linear-gradient(#b0b0b0, #b0b0b0) 2px 0 / 1px 100% no-repeat;
}
.second .sep {
    width: 5px;
}
.tool {
    display: flex;
    align-items: center;
    justify-content: center;
    width: 22px;
    height: 22px;
}
.tool svg {
    width: 16px;
    height: 16px;
}
.tool.big svg {
    width: 18px;
    height: 18px;
}
.tool:disabled {
    opacity: .35;
}
.tool.active {
    border: 1px solid #4a98d9;
    background: #e3f0fa;
}
.tool.drop {
    width: 35px;
    justify-content: flex-start;
    gap: 5px;
    padding-left: 5px;
}
.tool.drop::after {
    content: "";
    border: 3px solid transparent;
    border-top-color: #222;
    border-bottom: none;
}
.letter {
    font-family: "Liberation Serif", serif;
    font-size: 18px;
    font-weight: bold;
}
.italic {
    font-style: italic;
}
.underline {
    text-decoration: underline;
}
.size + .letter {
    margin-left: 6px;
}
.overflow {
    display: flex;
    flex-direction: column;
    align-items: center;
    justify-content: flex-end;
    gap: 1px;
    align-self: stretch;
    width: 11px;
    padding-bottom: 3px;
    color: #b5b5b5;
    background: #f0f0f0;
}
.overflow.dark {
    color: #000;
}
.overflow::before {
    content: "";
    width: 6px;
    height: 1px;
    background: currentColor;
}
.overflow::after {
    content: "";
    border: 3px solid transparent;
    border-top-color: currentColor;
    border-bottom: none;
}
.combo {
    position: relative;
    height: 22px;
    border: 1px solid #b0b0b0;
    background: #f4f4f4;
    color: #777;
}
.combo select {
    width: 100%;
    height: 100%;
    padding: 0 4px;
    appearance: none;
    opacity: 1;
}
.combo::after {
    content: "";
    position: absolute;
    right: 3px;
    top: 9px;
    border: 3px solid transparent;
    border-top-color: currentColor;
    border-bottom: none;
    pointer-events: none;
}
.combo.style {
    width: 101px;
    margin: 0 1px;
}
.combo.font {
    width: 151px;
    margin: 0 1px;
}
.combo.size {
    width: 45px;
}
.combo.zoom {
    width: 61px;
    border-color: #fff;
    color: #000;
    font-size: 13px;
    background: linear-gradient(90deg, #fff 48px, #eee 48px);
}

/* 面板 */
.workspace {
    display: flex;
    flex: 1;
    min-height: 0;
}
.side {
    display: flex;
    flex-direction: column;
    gap: 5px;
}
.left {
    width: 249px;
}
.right {
    width: 250px;
}
.panel {
    display: flex;
    flex-direction: column;
    flex: 1;
    min-height: 0;
    background: #fff;
}
.right .panel {
    background: #f0f0f0;
}
.panel-title {
    display: grid;
    grid-template-columns: 1fr auto 1fr;
    align-items: center;
    height: 17px;
    border-bottom: 1px solid #8a8a8a;
    background: linear-gradient(#ececec, #d0d0d0);
}
.panel-title h2 {
    grid-column: 2;
    line-height: 16px;
    color: #666;
}
.panel-btns {
    display: flex;
    justify-content: flex-end;
    gap: 8px;
    padding-right: 8px;
}
.panel-btns button, .tab button {
    display: flex;
}
.panel-btns svg, .tab svg {
    width: 9px;
    height: 9px;
}
.panel-tools {
    display: flex;
    align-items: center;
    height: 24px;
    border-bottom: 1px solid #8a8a8a;
    background: linear-gradient(#ececec, #d0d0d0);
}
.panel-tools button {
    display: flex;
    align-items: center;
    padding-left: 3px;
    width: 23px;
    height: 23px;
}
.panel-tools svg {
    width: 16px;
    height: 16px;
}
.panel-tools button:disabled {
    opacity: .3;
}
.panel-tools .library {
    width: auto;
    gap: 1px;
    padding: 0 3px 0 2px;
}
.library::after {
    content: "";
    border: 3px solid transparent;
    border-top: 4px solid #000;
    border-bottom: none;
}

/* 站点地图 */
.tree li, .page-list li {
    display: flex;
    align-items: center;
    gap: 8px;
    height: 18px;
    padding-left: 40px;
}
.tree svg, .page-list svg {
    width: 12px;
    height: 14px;
}
.tree .root {
    padding-left: 5px;
    border: 1px solid #888;
    border-radius: 4px;
    background: #f7f7f7;
}
.root, .page-list, .tab {
    font-family: "Liberation Sans", Arial, sans-serif;
    font-size: 12px;
    font-weight: bold;
}
.twisty {
    border: 4px solid #333;
    border-top-color: transparent;
    border-left-color: transparent;
}
.tree .selected {
    color: #fff;
    background: #516fd6;
}
.page-list li {
    padding-left: 5px;
}

/* 元件 */
.widgets {
    position: relative;
    display: flex;
    flex: 1;
    min-height: 0;
}
.widget-grid {
    display: grid;
    grid-template-columns: repeat(3, 70px);
    gap: 23px 4px;
    align-content: start;
    flex: 1;
    padding-top: 8px;
}
.widget-grid li {
    display: flex;
    flex-direction: column;
    align-items: center;
    gap: 5px;
}
.widget-grid svg {
    width: 28px;
    height: 28px;
}
.widget-grid span {
    padding: 0 2px;
    line-height: 18px;
    border-radius: 3px;
}
.widget-grid .selected span {
    color: #fff;
    background: #516fd6;
}
.help {
    position: absolute;
    top: 1px;
    right: 28px;
    width: 15px;
    height: 15px;
    border: 1px solid #888;
    border-radius: 3px;
    line-height: 12px;
    background: #eee;
}

/* 滚动条 */
.scroll {
    display: flex;
    align-items: center;
    background: #ececec;
}
.vertical {
    flex-direction: column;
    width: 16px;
    padding: 6px 0;
}
.horizontal {
    padding: 0 8px 0 6px;
}
.arrow {
    width: 0;
    height: 0;
    border: 3px solid transparent;
}
.arrow.up {
    border-bottom: 4px solid #666;
    border-top: none;
}
.arrow.down {
    border-top: 4px solid #666;
    border-bottom: none;
}
.arrow.left {
    border-right: 4px solid #666;
    border-left: none;
}
.arrow.right {
    border-left: 4px solid #666;
    border-right: none;
}
.scroll .arrow:last-child {
    margin-top: auto;
}
.horizontal .arrow:last-child {
    margin: 0 16px 0 auto;
}
.thumb {
    border: 1px solid #888;
    border-radius: 2px;
    background: linear-gradient(#fafafa, #d5d5d5);
}
.vertical .thumb {
    width: 15px;
    height: 7px;
    margin-top: 7px;
}
.vertical.lines .thumb {
    height: 32px;
    background: repeating-linear-gradient(#333 0 1px, transparent 1px 3px) center / 7px 10px no-repeat, linear-gradient(90deg, #fafafa, #d0d0d0);
}
.horizontal .thumb {
    width: 8px;
    height: 15px;
    margin-left: 7px;
}

/* 分隔条 */
.splitter {
    display: flex;
    align-items: center;
    justify-content: center;
    width: 5px;
    background: #cfcfcf;
}
.splitter.flat {
    width: auto;
    height: 5px;
}
.handle {
    display: flex;
    align-items: center;
    justify-content: center;
    width: 5px;
    height: 100px;
    background: #777;
}
.flat .handle {
    width: 100px;
    height: 5px;
}
.handle .arrow.left {
    border-right-color: #fff;
}
.handle .arrow.right {
    border-left-color: #fff;
}
.handle .arrow.down {
    border-top-color: #fff;
}

/* 编辑区 */
.center {
    display: flex;
    flex-direction: column;
    flex: 1;
    min-width: 0;
}
.tabs {
    display: flex;
    align-items: flex-end;
    height: 21px;
    border-bottom: 1px solid #888;
    background: #fff;
}
.tab-menu {
    display: flex;
    align-items: center;
    justify-content: center;
    width: 21px;
    height: 17px;
    border: 1px solid #888;
    border-bottom: none;
    border-radius: 4px 4px 0 0;
    background: linear-gradient(#f0f0f0, #d0d0d0);
}
.tab-menu .arrow {
    border-width: 4px 4px 0;
    border-top-color: #000;
}
.tab {
    display: flex;
    align-items: center;
    gap: 12px;
    height: 18px;
    margin-bottom: -1px;
    padding: 0 7px;
    border: 1px solid #888;
    border-bottom: none;
    border-radius: 5px 5px 0 0;
    background: #f9f9f9;
}
.editor {
    display: grid;
    grid-template-columns: 15px 1fr 16px;
    grid-template-rows: 18px 1fr 17px;
    flex: 1;
    min-height: 0;
    background: #fff;
}
.corner {
    border-right: 1px solid #222;
    border-bottom: 1px solid #222;
    background: #f9f9f9;
}
.ruler-h, .ruler-v {
    display: flex;
    overflow: hidden;
    font-size: 10px;
    color: #444;
}
.ruler-h {
    grid-column: 2 / 4;
    border-bottom: 1px solid #444;
    background:
        linear-gradient(90deg, #444 1px, transparent 1px) -1px 100% / 100px 14px repeat-x,
        linear-gradient(90deg, #444 1px, transparent 1px) -1px 100% / 50px 8px repeat-x,
        linear-gradient(90deg, #444 1px, transparent 1px) -1px 100% / 10px 3px repeat-x,
        #f9f9f9;
}
.ruler-h span {
    flex: 0 0 100px;
    padding-left: 1px;
    line-height: 17px;
}
.ruler-v {
    grid-row: 2 / 4;
    min-height: 0;
    flex-direction: column;
    border-right: 1px solid #444;
    background:
        linear-gradient(#444 1px, transparent 1px) 100% -1px / 14px 100px repeat-y,
        linear-gradient(#444 1px, transparent 1px) 100% -1px / 8px 50px repeat-y,
        linear-gradient(#444 1px, transparent 1px) 100% -1px / 3px 10px repeat-y,
        #f9f9f9;
}
.ruler-v span {
    flex: 0 0 100px;
    padding-bottom: 2px;
    line-height: 12px;
    text-align: right;
    writing-mode: vertical-rl;
    transform: rotate(180deg);
}
.canvas {
    width: 100%;
    height: 100%;
    min-height: 0;
}
.editor .horizontal {
    grid-column: 2 / 4;
}

/* 页面交互 */
.page-panel {
    position: relative;
    height: 250px;
    padding-top: 6px;
    background: #f0f0f0;
}
.page-panel .panel-btns {
    position: absolute;
    top: 2px;
    right: 3px;
    padding: 0;
}
.segments {
    display: flex;
    align-items: center;
}
.segments::before, .segments::after {
    content: "";
    flex: 1;
    height: 1px;
    background: #888;
}
.segments button {
    display: flex;
    align-items: center;
    justify-content: center;
    width: 68px;
    height: 18px;
    border: 1px solid #777;
    border-left-width: 0;
    background: linear-gradient(#fafafa, #d6d6d6);
}
.segments button:first-of-type {
    border-left-width: 1px;
    border-radius: 4px 0 0 4px;
}
.segments button:last-of-type {
    border-radius: 0 4px 4px 0;
}
.segments .on {
    background: linear-gradient(#a8d6f5, #86c3ec);
}
.segments.icons button {
    width: 29px;
}
.icons svg {
    width: 16px;
    height: 14px;
}
.links {
    display: flex;
    gap: 6px;
    padding: 0 10px;
    line-height: 18px;
}
.links a {
    color: #888;
    text-decoration: none;
}
.links .enabled {
    color: #0000d8;
}
.page-panel .links {
    padding-top: 8px;
}
.event {
    display: flex;
    align-items: center;
    gap: 6px;
    height: 18px;
    margin-top: 3px;
    padding-left: 21px;
    color: #fff;
    background: #516fd6;
}
.event svg {
    width: 16px;
    height: 16px;
}

/* 元件属性 */
.field {
    display: flex;
    flex-direction: column;
    gap: 1px;
    padding: 4px 5px 8px;
}
.field label {
    line-height: 18px;
    color: #999;
}
.field input {
    height: 20px;
    border: 1px solid #a5a5a5;
    border-radius: 2px;
    background: #f3f3f3;
}
.caption {
    margin: 5px 0 6px;
    line-height: 18px;
    text-align: center;
    color: #666;
}
```
